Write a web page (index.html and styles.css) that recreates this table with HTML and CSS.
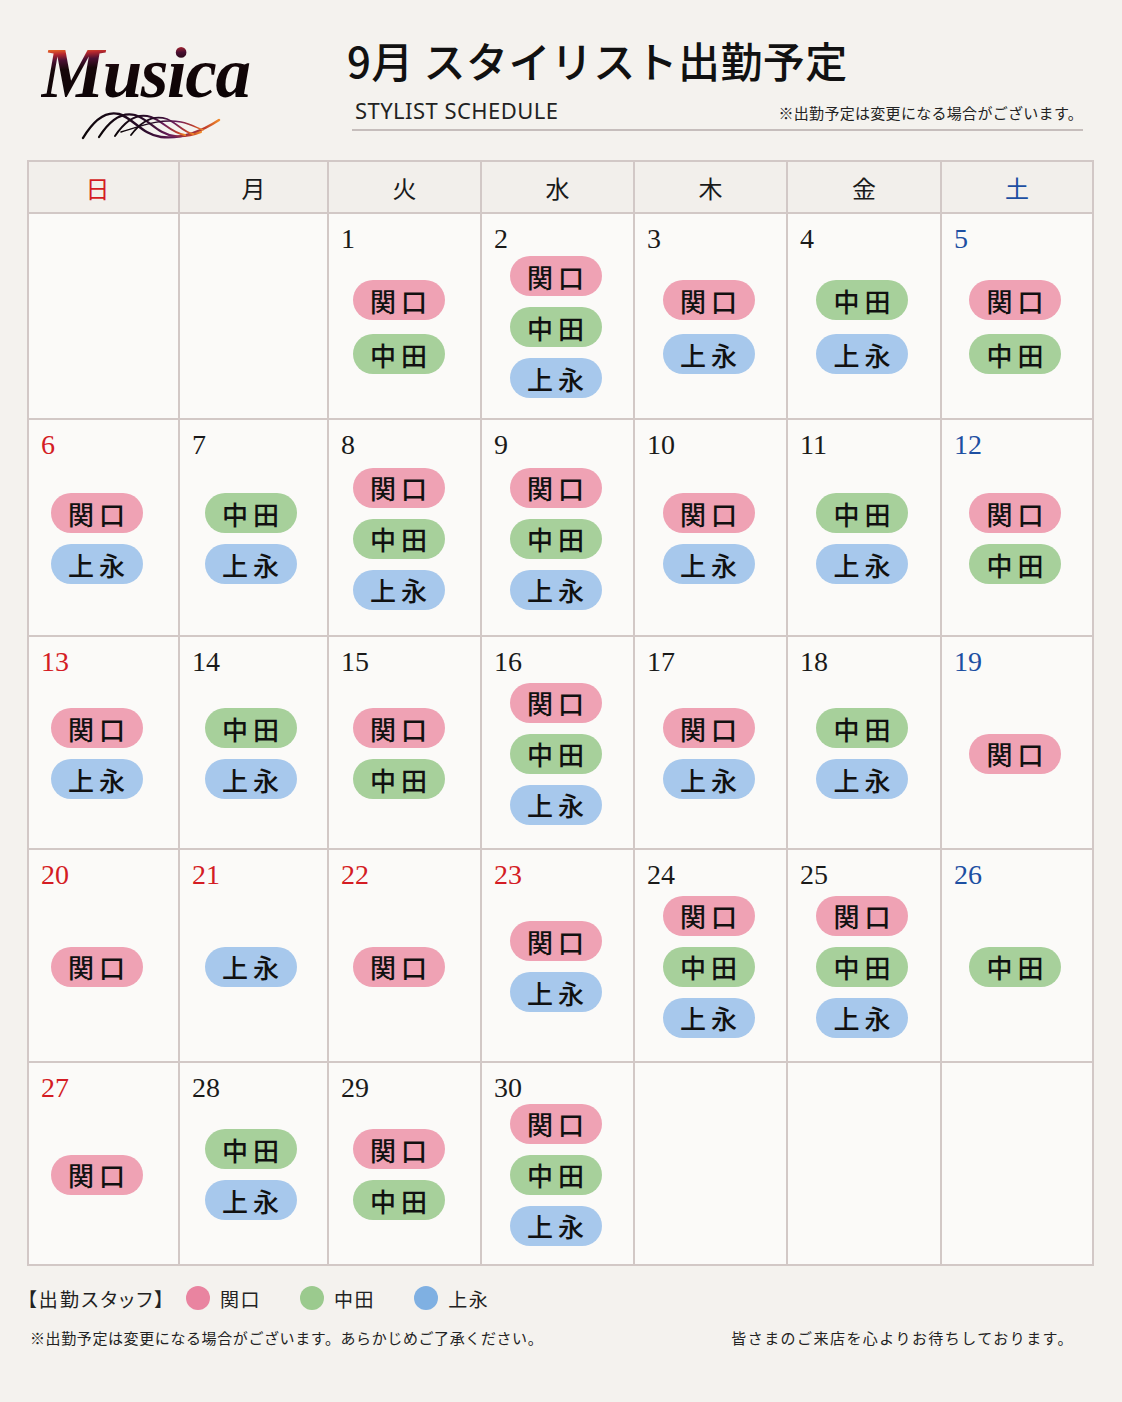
FILE: index.html
```html
<!DOCTYPE html>
<html lang="ja">
<head>
<meta charset="utf-8">
<title>9月 スタイリスト出勤予定</title>
<link rel="stylesheet" href="styles.css">
</head>
<body>
<div class="page">
  <header class="top">
    <div class="logo">
      <div class="logo-word">Musica</div>
      <svg class="logo-waves" width="142" height="34" viewBox="0 0 142 34">
        <defs>
          <linearGradient id="wg" x1="0" y1="0" x2="1" y2="0">
            <stop offset="0" stop-color="#0c0608"/>
            <stop offset="0.45" stop-color="#2a0c2a"/>
            <stop offset="0.7" stop-color="#6a1c5a"/>
            <stop offset="0.9" stop-color="#c2402a"/>
            <stop offset="1" stop-color="#f08a2a"/>
          </linearGradient>
        </defs>
        <g fill="none" stroke="url(#wg)" stroke-linecap="round">
          <path d="M2 30 C14 10 26 3 38 6 C52 10 62 27 80 29 C98 31 118 25 138 12" stroke-width="2.4"/>
          <path d="M18 29 C30 10 42 4 54 7 C68 11 76 26 94 28 C104 29 112 27 120 24" stroke-width="2.2"/>
          <path d="M34 28 C46 10 58 5 70 9 C82 13 90 25 104 27" stroke-width="2"/>
          <path d="M50 27 C62 11 74 7 86 11 C96 15 102 24 112 26" stroke-width="1.8"/>
          <path d="M40 24 C60 18 80 10 100 14 C110 16 116 20 122 22" stroke-width="1.4"/>
        </g>
      </svg>
    </div>
    <div class="titles">
      <h1 class="title">9月 スタイリスト出勤予定</h1>
      <div class="subrow">
        <span class="sub-en">STYLIST SCHEDULE</span>
        <span class="sub-note">※出勤予定は変更になる場合がございます。</span>
      </div>
    </div>
  </header>

  <div class="cal">
    <div class="dow sun">日</div>
    <div class="dow">月</div>
    <div class="dow">火</div>
    <div class="dow">水</div>
    <div class="dow">木</div>
    <div class="dow">金</div>
    <div class="dow sat">土</div>

    <!-- week 1 -->
    <div class="day empty"></div>
    <div class="day empty"></div>
    <div class="day"><div class="num">1</div><div class="pills wide"><span class="pill s">関口</span><span class="pill n">中田</span></div></div>
    <div class="day"><div class="num">2</div><div class="pills"><span class="pill s">関口</span><span class="pill n">中田</span><span class="pill k">上永</span></div></div>
    <div class="day"><div class="num">3</div><div class="pills wide"><span class="pill s">関口</span><span class="pill k">上永</span></div></div>
    <div class="day"><div class="num">4</div><div class="pills wide"><span class="pill n">中田</span><span class="pill k">上永</span></div></div>
    <div class="day"><div class="num sat">5</div><div class="pills wide"><span class="pill s">関口</span><span class="pill n">中田</span></div></div>

    <!-- week 2 -->
    <div class="day"><div class="num sun">6</div><div class="pills"><span class="pill s">関口</span><span class="pill k">上永</span></div></div>
    <div class="day"><div class="num">7</div><div class="pills"><span class="pill n">中田</span><span class="pill k">上永</span></div></div>
    <div class="day"><div class="num">8</div><div class="pills"><span class="pill s">関口</span><span class="pill n">中田</span><span class="pill k">上永</span></div></div>
    <div class="day"><div class="num">9</div><div class="pills"><span class="pill s">関口</span><span class="pill n">中田</span><span class="pill k">上永</span></div></div>
    <div class="day"><div class="num">10</div><div class="pills"><span class="pill s">関口</span><span class="pill k">上永</span></div></div>
    <div class="day"><div class="num">11</div><div class="pills"><span class="pill n">中田</span><span class="pill k">上永</span></div></div>
    <div class="day"><div class="num sat">12</div><div class="pills"><span class="pill s">関口</span><span class="pill n">中田</span></div></div>

    <!-- week 3 -->
    <div class="day"><div class="num sun">13</div><div class="pills"><span class="pill s">関口</span><span class="pill k">上永</span></div></div>
    <div class="day"><div class="num">14</div><div class="pills"><span class="pill n">中田</span><span class="pill k">上永</span></div></div>
    <div class="day"><div class="num">15</div><div class="pills"><span class="pill s">関口</span><span class="pill n">中田</span></div></div>
    <div class="day"><div class="num">16</div><div class="pills"><span class="pill s">関口</span><span class="pill n">中田</span><span class="pill k">上永</span></div></div>
    <div class="day"><div class="num">17</div><div class="pills"><span class="pill s">関口</span><span class="pill k">上永</span></div></div>
    <div class="day"><div class="num">18</div><div class="pills"><span class="pill n">中田</span><span class="pill k">上永</span></div></div>
    <div class="day"><div class="num sat">19</div><div class="pills"><span class="pill s">関口</span></div></div>

    <!-- week 4 -->
    <div class="day"><div class="num sun">20</div><div class="pills"><span class="pill s">関口</span></div></div>
    <div class="day"><div class="num sun">21</div><div class="pills"><span class="pill k">上永</span></div></div>
    <div class="day"><div class="num sun">22</div><div class="pills"><span class="pill s">関口</span></div></div>
    <div class="day"><div class="num sun">23</div><div class="pills"><span class="pill s">関口</span><span class="pill k">上永</span></div></div>
    <div class="day"><div class="num">24</div><div class="pills"><span class="pill s">関口</span><span class="pill n">中田</span><span class="pill k">上永</span></div></div>
    <div class="day"><div class="num">25</div><div class="pills"><span class="pill s">関口</span><span class="pill n">中田</span><span class="pill k">上永</span></div></div>
    <div class="day"><div class="num sat">26</div><div class="pills"><span class="pill n">中田</span></div></div>

    <!-- week 5 -->
    <div class="day"><div class="num sun">27</div><div class="pills"><span class="pill s">関口</span></div></div>
    <div class="day"><div class="num">28</div><div class="pills"><span class="pill n">中田</span><span class="pill k">上永</span></div></div>
    <div class="day"><div class="num">29</div><div class="pills"><span class="pill s">関口</span><span class="pill n">中田</span></div></div>
    <div class="day"><div class="num">30</div><div class="pills"><span class="pill s">関口</span><span class="pill n">中田</span><span class="pill k">上永</span></div></div>
    <div class="day empty"></div>
    <div class="day empty"></div>
    <div class="day empty"></div>
  </div>

  <div class="legend">
    <span class="legend-title">【出勤スタッフ】</span>
    <span class="legend-item"><span class="dot s"></span>関口</span>
    <span class="legend-item"><span class="dot n"></span>中田</span>
    <span class="legend-item"><span class="dot k"></span>上永</span>
  </div>

  <footer class="foot">
    <span class="foot-left">※出勤予定は変更になる場合がございます。あらかじめご了承ください。</span>
    <span class="foot-right">皆さまのご来店を心よりお待ちしております。</span>
  </footer>
</div>
</body>
</html>
```

FILE: styles.css
```css
* { box-sizing: border-box; }

html, body {
  margin: 0;
  padding: 0;
}

body {
  background: #f4f2ee;
  font-family: "Noto Sans CJK JP", "Noto Sans", sans-serif;
  color: #1a1a1a;
  width: 1122px;
  height: 1402px;
  overflow: hidden;
}

.page {
  padding: 0 28px;
}

/* ---------- top ---------- */
.top {
  height: 160px;
  display: flex;
  align-items: flex-start;
}

.logo {
  width: 324px;
  padding-top: 34px;
  padding-left: 13px;
  display: flex;
  flex-direction: column;
}

.logo-word {
  font-family: "Liberation Serif", serif;
  font-style: italic;
  font-weight: bold;
  font-size: 71px;
  line-height: 78px;
  letter-spacing: -1.4px;
  width: 220px;
  background: linear-gradient(176deg, #ff8a2a 0%, #f07024 17%, #b8282e 23%, #4a1032 30%, #160709 40%, #050203 100%);
  -webkit-background-clip: text;
  background-clip: text;
  color: transparent;
}

.logo-waves {
  margin-left: 40px;
  margin-top: -4px;
}

.titles {
  width: 731px;
  padding-top: 32px;
}

.title {
  margin: 0 0 0 -5px;
  font-size: 42px;
  font-weight: 500;
  line-height: 56px;
  letter-spacing: 0.4px;
  color: #111;
}

.subrow {
  display: flex;
  justify-content: space-between;
  align-items: flex-end;
  border-bottom: 2px solid #c6bebc;
  padding: 4px 0 5px 3px;
  margin-top: 4px;
}

.sub-en {
  font-family: "Noto Sans", sans-serif;
  font-size: 22px;
  line-height: 28px;
  letter-spacing: 0.45px;
  color: #222;
}

.sub-note {
  font-size: 15px;
  line-height: 22px;
  letter-spacing: 0.3px;
  color: #222;
}

/* ---------- calendar ---------- */
.cal {
  display: grid;
  grid-template-columns: 149px 147px 151px 151px 151px 152px 150px;
  grid-template-rows: 50px 204px 215px 211px 211px 201px;
  gap: 2px;
  border: 2px solid #d2c8c6;
  background: #d2c8c6;
  width: 1067px;
  margin-left: -1px;
}

.dow {
  background: #f2efeb;
  display: flex;
  align-items: center;
  justify-content: center;
  font-size: 24px;
  color: #1a1a1a;
}

.dow.sun { color: #d41c24; padding-right: 12px; }
.dow.sat { color: #1d4fa2; }

.day {
  background: #fbfaf8;
  display: flex;
  flex-direction: column;
  padding: 10px 4px 18px 0;
}

/* column offsets (first child day is the 8th grid item) */
.day:nth-child(7n+1) { padding-right: 14px; }
.day:nth-child(7n+2) { padding-right: 6px; }
.day:nth-child(7n+3) { padding-right: 12px; }

.num {
  font-family: "Liberation Serif", serif;
  font-size: 28px;
  line-height: 30px;
  padding-left: 12px;
  color: #1a1a1a;
}

.num.sun { color: #d41c24; }
.num.sat { color: #1d4fa2; }

.pills {
  flex: 1;
  display: flex;
  flex-direction: column;
  align-items: center;
  justify-content: center;
  gap: 11px;
}

.pills.wide { gap: 14px; }

.pill {
  width: 92px;
  height: 40px;
  border-radius: 20px;
  display: flex;
  align-items: center;
  justify-content: center;
  font-size: 26px;
  font-weight: 500;
  letter-spacing: 5px;
  padding-left: 5px;
  color: #111;
}

.pill.s { background: #efa2b4; }
.pill.n { background: #a7d09b; }
.pill.k { background: #a7c8ec; }

/* ---------- legend & footer ---------- */
.legend {
  display: flex;
  align-items: center;
  margin-top: 19px;
  height: 26px;
  font-size: 19px;
  color: #222;
}

.legend-title {
  font-feature-settings: "palt";
  letter-spacing: 2.2px;
  margin-left: -1px;
  margin-right: 20px;
}

.legend-item {
  display: flex;
  align-items: center;
  gap: 10px;
  letter-spacing: 1.5px;
  margin-right: 39px;
}

.dot {
  width: 24px;
  height: 24px;
  border-radius: 50%;
}

.dot.s { background: #e984a0; }
.dot.n { background: #9bca8e; }
.dot.k { background: #7fb0e2; }

.foot {
  display: flex;
  justify-content: space-between;
  margin-top: 16px;
  padding: 0 20px 0 2px;
  font-size: 15px;
  line-height: 22px;
  color: #222;
}

.foot-left { letter-spacing: 0.6px; }
.foot-right { letter-spacing: 1.45px; }
```
